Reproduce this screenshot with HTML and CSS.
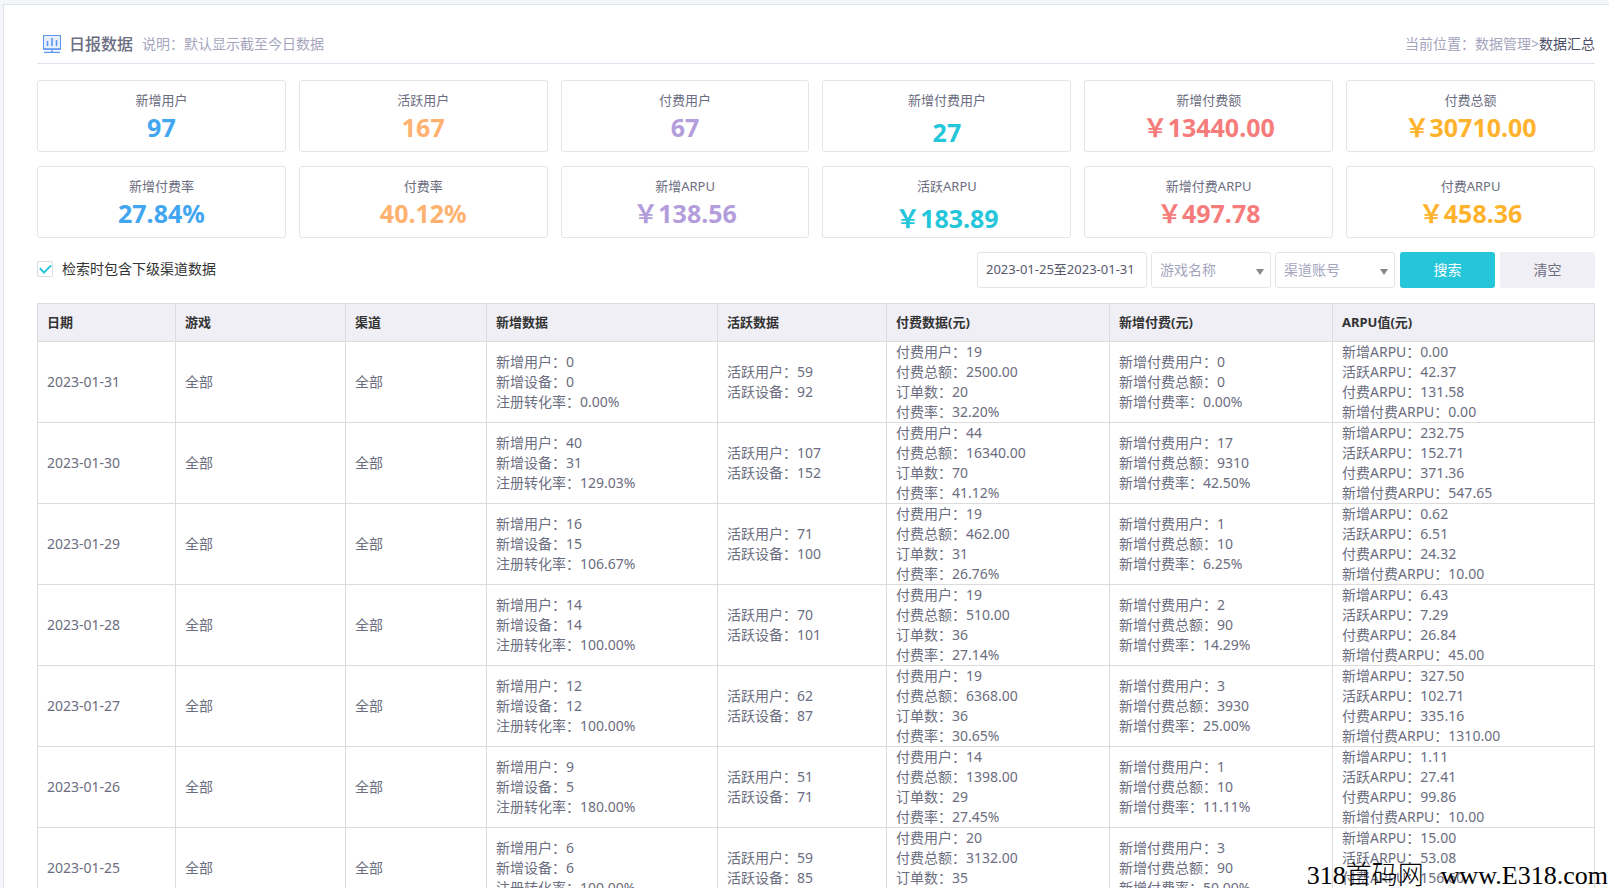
FILE: index.html
```html
<!DOCTYPE html>
<html lang="zh-CN">
<head>
<meta charset="utf-8">
<title>日报数据</title>
<link rel="stylesheet" href="styles.css">
</head>
<body>
<div class="page">
<main class="panel">
  <header class="panel-header">
    <svg class="title-icon" viewBox="0 0 18 18" width="18" height="18" aria-hidden="true">
      <rect x="0.5" y="0.5" width="17" height="13.5" fill="#e6effd" stroke="#5b93ee"/>
      <path d="M4.5 6v5M9 3v8M13.5 5v6" stroke="#5b93ee" stroke-width="1.5" fill="none"/>
      <path d="M0 14.2h18M9 14v3M1 17.3h16" stroke="#5b93ee" stroke-width="1.3" fill="none"/>
    </svg>
    <h1 class="title">日报数据</h1>
    <p class="subtitle">说明：默认显示截至今日数据</p>
    <nav class="crumbs" aria-label="当前位置">当前位置：<a class="crumb" href="#">数据管理</a>&gt;<span class="crumb-current">数据汇总</span></nav>
  </header>

  <section class="stats">
    <div class="stat"><div class="stat-label">新增用户</div><div class="stat-value blue">97</div></div>
    <div class="stat"><div class="stat-label">活跃用户</div><div class="stat-value orange">167</div></div>
    <div class="stat"><div class="stat-label">付费用户</div><div class="stat-value purple">67</div></div>
    <div class="stat"><div class="stat-label">新增付费用户</div><div class="stat-value teal">27</div></div>
    <div class="stat"><div class="stat-label">新增付费额</div><div class="stat-value red">￥13440.00</div></div>
    <div class="stat"><div class="stat-label">付费总额</div><div class="stat-value amber">￥30710.00</div></div>
    <div class="stat"><div class="stat-label">新增付费率</div><div class="stat-value blue">27.84%</div></div>
    <div class="stat"><div class="stat-label">付费率</div><div class="stat-value orange">40.12%</div></div>
    <div class="stat"><div class="stat-label">新增ARPU</div><div class="stat-value purple">￥138.56</div></div>
    <div class="stat"><div class="stat-label">活跃ARPU</div><div class="stat-value teal">￥183.89</div></div>
    <div class="stat"><div class="stat-label">新增付费ARPU</div><div class="stat-value red">￥497.78</div></div>
    <div class="stat"><div class="stat-label">付费ARPU</div><div class="stat-value amber">￥458.36</div></div>
  </section>

  <form class="filters">
    <label class="check"><input class="check-box" type="checkbox" checked><span>检索时包含下级渠道数据</span></label>
    <div class="fields">
      <input class="field date" type="text" value="2023-01-25至2023-01-31" aria-label="日期范围">
      <select class="field select" aria-label="游戏名称"><option>游戏名称</option></select>
      <select class="field select" aria-label="渠道账号"><option>渠道账号</option></select>
    </div>
    <button class="btn btn-primary" type="button">搜索</button>
    <button class="btn" type="reset">清空</button>
  </form>

  <table class="report">
    <colgroup><col class="c-date"><col class="c-game"><col class="c-channel"><col class="c-new"><col class="c-active"><col class="c-pay"><col class="c-pay"><col></colgroup>
    <thead>
      <tr><th>日期</th><th>游戏</th><th>渠道</th><th>新增数据</th><th>活跃数据</th><th>付费数据(元)</th><th>新增付费(元)</th><th>ARPU值(元)</th></tr>
    </thead>
    <tbody>
      <tr><td>2023-01-31</td><td>全部</td><td>全部</td>
        <td>新增用户：0<br>新增设备：0<br>注册转化率：0.00%</td>
        <td>活跃用户：59<br>活跃设备：92</td>
        <td>付费用户：19<br>付费总额：2500.00<br>订单数：20<br>付费率：32.20%</td>
        <td>新增付费用户：0<br>新增付费总额：0<br>新增付费率：0.00%</td>
        <td>新增ARPU：0.00<br>活跃ARPU：42.37<br>付费ARPU：131.58<br>新增付费ARPU：0.00</td></tr>
      <tr><td>2023-01-30</td><td>全部</td><td>全部</td>
        <td>新增用户：40<br>新增设备：31<br>注册转化率：129.03%</td>
        <td>活跃用户：107<br>活跃设备：152</td>
        <td>付费用户：44<br>付费总额：16340.00<br>订单数：70<br>付费率：41.12%</td>
        <td>新增付费用户：17<br>新增付费总额：9310<br>新增付费率：42.50%</td>
        <td>新增ARPU：232.75<br>活跃ARPU：152.71<br>付费ARPU：371.36<br>新增付费ARPU：547.65</td></tr>
      <tr><td>2023-01-29</td><td>全部</td><td>全部</td>
        <td>新增用户：16<br>新增设备：15<br>注册转化率：106.67%</td>
        <td>活跃用户：71<br>活跃设备：100</td>
        <td>付费用户：19<br>付费总额：462.00<br>订单数：31<br>付费率：26.76%</td>
        <td>新增付费用户：1<br>新增付费总额：10<br>新增付费率：6.25%</td>
        <td>新增ARPU：0.62<br>活跃ARPU：6.51<br>付费ARPU：24.32<br>新增付费ARPU：10.00</td></tr>
      <tr><td>2023-01-28</td><td>全部</td><td>全部</td>
        <td>新增用户：14<br>新增设备：14<br>注册转化率：100.00%</td>
        <td>活跃用户：70<br>活跃设备：101</td>
        <td>付费用户：19<br>付费总额：510.00<br>订单数：36<br>付费率：27.14%</td>
        <td>新增付费用户：2<br>新增付费总额：90<br>新增付费率：14.29%</td>
        <td>新增ARPU：6.43<br>活跃ARPU：7.29<br>付费ARPU：26.84<br>新增付费ARPU：45.00</td></tr>
      <tr><td>2023-01-27</td><td>全部</td><td>全部</td>
        <td>新增用户：12<br>新增设备：12<br>注册转化率：100.00%</td>
        <td>活跃用户：62<br>活跃设备：87</td>
        <td>付费用户：19<br>付费总额：6368.00<br>订单数：36<br>付费率：30.65%</td>
        <td>新增付费用户：3<br>新增付费总额：3930<br>新增付费率：25.00%</td>
        <td>新增ARPU：327.50<br>活跃ARPU：102.71<br>付费ARPU：335.16<br>新增付费ARPU：1310.00</td></tr>
      <tr><td>2023-01-26</td><td>全部</td><td>全部</td>
        <td>新增用户：9<br>新增设备：5<br>注册转化率：180.00%</td>
        <td>活跃用户：51<br>活跃设备：71</td>
        <td>付费用户：14<br>付费总额：1398.00<br>订单数：29<br>付费率：27.45%</td>
        <td>新增付费用户：1<br>新增付费总额：10<br>新增付费率：11.11%</td>
        <td>新增ARPU：1.11<br>活跃ARPU：27.41<br>付费ARPU：99.86<br>新增付费ARPU：10.00</td></tr>
      <tr><td>2023-01-25</td><td>全部</td><td>全部</td>
        <td>新增用户：6<br>新增设备：6<br>注册转化率：100.00%</td>
        <td>活跃用户：59<br>活跃设备：85</td>
        <td>付费用户：20<br>付费总额：3132.00<br>订单数：35<br>付费率：33.90%</td>
        <td>新增付费用户：3<br>新增付费总额：90<br>新增付费率：50.00%</td>
        <td>新增ARPU：15.00<br>活跃ARPU：53.08<br>付费ARPU：156.60<br>新增付费ARPU：30.00</td></tr>
    </tbody>
  </table>
</main>
<div class="watermark"><span>318首码网</span><span>www.E318.com</span></div>
</div>
</body>
</html>
```
FILE: styles.css
```css
* { box-sizing: border-box; }

body {
  margin: 0;
  background: #f5f6fa;
  color: #6b6d80;
  font-family: "Noto Sans", "Noto Sans CJK SC", sans-serif;
  font-size: 14px;
  line-height: 20px;
}

.page {
  position: relative;
  height: 100vh;
  padding: 4px 0 0 3px;
  overflow: hidden;
}

.panel {
  padding: 22px 14px 0 33px;
  background: #fff;
  border-top: 1px solid #dfe4ea;
  border-left: 1px solid #dfe4ea;
}

.panel-header {
  display: flex;
  align-items: center;
  height: 37px;
  padding: 0 0 3px 6px;
  border-bottom: 1px solid #dfe1ee;
}

.title-icon { flex: none; }

.title {
  margin: 0 9px 0 8px;
  font-size: 16px;
  font-weight: 500;
}

.subtitle { margin: 0; color: #a5a5be; }

.crumbs { margin-left: auto; color: #a5a5be; }
.crumb { color: inherit; text-decoration: none; }
.crumb-current { color: #4d4f68; }

.stats {
  display: grid;
  grid-template-columns: repeat(6, 1fr);
  gap: 14px 13px;
  margin-top: 16px;
}

.stat {
  height: 72px;
  padding-top: 9px;
  border: 1px solid #e4e5e7;
  border-radius: 3px;
  text-align: center;
}

.stat-label { font-size: 13px; }

.stat-value {
  font-size: 25px;
  font-weight: 700;
  line-height: 34px;
}

.blue { color: #42a5f0; }
.orange { color: #ffb270; }
.purple { color: #b39ddb; }
.teal { margin-top: 5px; color: #26c6da; }
.red { color: #f67c7c; }
.amber { color: #ffb22b; }

.filters {
  display: flex;
  align-items: center;
  gap: 5px;
  margin: 14px 0 15px;
}

.check {
  display: flex;
  align-items: center;
  gap: 9px;
  margin-right: auto;
  padding-bottom: 3px;
  color: #333;
}

.check-box {
  appearance: none;
  display: grid;
  place-items: center;
  width: 16px;
  height: 16px;
  margin: 0;
  border: 1px solid #d3dfe5;
  border-radius: 2px;
}

.check-box:checked::before {
  content: "";
  width: 9px;
  height: 5px;
  margin-bottom: 2px;
  border: solid #26c6da;
  border-width: 0 0 2px 2px;
  transform: rotate(-45deg);
}

.fields { display: flex; gap: 4px; }

.field {
  height: 36px;
  padding: 0 8px;
  background: #fff;
  border: 1px solid #e4e5e7;
  border-radius: 3px;
  font: inherit;
}

.date {
  width: 170px;
  padding-bottom: 3px;
  color: #55586c;
  font-size: 13px;
}

.select {
  appearance: none;
  width: 120px;
  color: #a5a5be;
  background-image: url("data:image/svg+xml,%3Csvg xmlns='http://www.w3.org/2000/svg' width='8' height='6'%3E%3Cpath d='M0 0h8L4 6z' fill='%23888'/%3E%3C/svg%3E");
  background-repeat: no-repeat;
  background-position: right 6px top 16px;
}

.btn {
  width: 95px;
  height: 36px;
  padding: 0;
  color: #6b6d80;
  background: #f0eff5;
  border: 0;
  border-radius: 3px;
  font: inherit;
}

.btn-primary { color: #fff; background: #26c6da; }

.report {
  width: 100%;
  table-layout: fixed;
  border-collapse: collapse;
}

.c-date { width: 138px; }
.c-game { width: 170px; }
.c-channel { width: 141px; }
.c-new { width: 231px; }
.c-active { width: 169px; }
.c-pay { width: 223px; }

.report th,
.report td {
  padding: 0 9px;
  border: 1px solid #dcdcde;
  text-align: left;
}

.report th {
  height: 38px;
  padding-bottom: 1px;
  color: #333;
  background: #f0eff5;
  font-size: 13px;
  font-weight: 700;
}

.report td { height: 81px; }

.watermark {
  position: absolute;
  right: 1px;
  bottom: -2px;
  display: flex;
  gap: 17px;
  color: #000;
  font-family: "Liberation Serif", "Noto Sans CJK SC", serif;
  font-size: 26px;
  font-weight: 300;
  line-height: 28px;
}
```
